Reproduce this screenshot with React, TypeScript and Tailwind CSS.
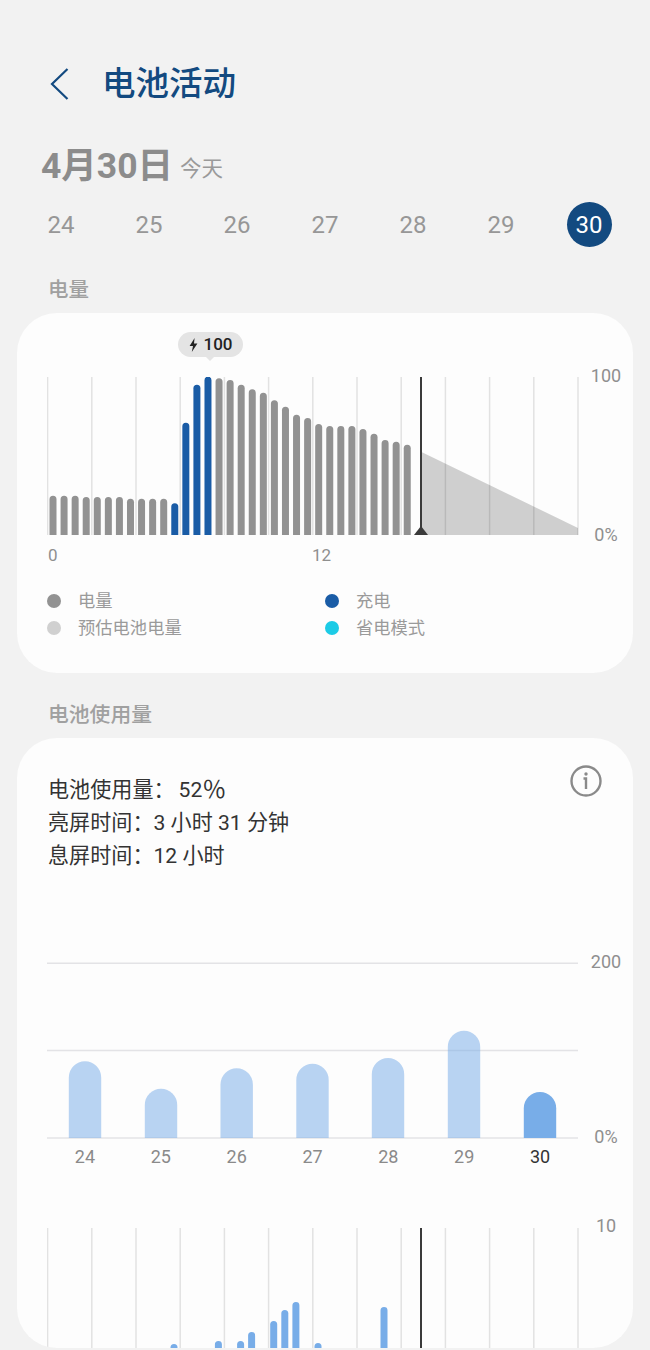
const days = ["24", "25", "26", "27", "28", "29", "30"]

// top of each bar in the level chart, in page pixels
const levelTops = [
  495.7, 495.7, 495.7, 497, 497, 497, 497, 498.7, 498.7, 498.7, 498.7, 503.3, 422.7, 384.7, 376.7, 378.3, 380,
  384.7, 389.3, 392.7, 400.3, 406.7, 414.7, 418, 424, 426, 426, 426, 429, 433.7, 440, 441.7, 444.7,
]
const chargingBars = [11, 12, 13, 14]

const usageBars = [
  { x: 85, top: 1061.3 },
  { x: 161, top: 1088.7 },
  { x: 236.7, top: 1068.3 },
  { x: 312.5, top: 1063.7 },
  { x: 388, top: 1058 },
  { x: 464, top: 1030.7 },
  { x: 540, top: 1092, today: true },
]

const hourlyBars = [
  { x: 174, top: 1344 },
  { x: 218.4, top: 1341 },
  { x: 240.6, top: 1341 },
  { x: 251.6, top: 1332 },
  { x: 273.7, top: 1321 },
  { x: 284.8, top: 1310 },
  { x: 295.9, top: 1302 },
  { x: 318, top: 1343 },
  { x: 329, top: 1349 },
  { x: 384, top: 1307 },
]

const gridX = Array.from({ length: 13 }, (_, i) => 47.6 + 44.2 * i)

function barPath(x: number, top: number, bottom: number, w: number) {
  const r = w / 2
  return `M${x - r} ${bottom}V${top + r}A${r} ${r} 0 0 1 ${x + r} ${top + r}V${bottom}Z`
}

function GridLines({ y1, y2 }: { y1: number; y2: number }) {
  return (
    <>
      {gridX.map((x) => (
        <line key={x} x1={x} x2={x} y1={y1} y2={y2} stroke="#e2e2e2" strokeWidth="1.5" />
      ))}
    </>
  )
}

function LevelChart() {
  return (
    <svg viewBox="47 377 532 159" className="block h-[159px] w-[532px] shrink-0">
      <GridLines y1={377} y2={535} />
      {levelTops.map((top, i) => (
        <path
          key={i}
          d={barPath(53 + 11.07 * i, top, 535, 7)}
          fill={chargingBars.includes(i) ? "#1a5ca6" : "#929292"}
        />
      ))}
      <polygon points="421,451.7 578,528 578,535 421,535" fill="#000000" fillOpacity="0.18" />
      <line x1="421" x2="421" y1="377" y2="535" stroke="#3a3a3a" strokeWidth="2" />
      <polygon points="421,526 428,535 414,535" fill="#3a3a3a" />
    </svg>
  )
}

function UsageChart() {
  return (
    <svg viewBox="47 962 532 177" className="block h-[177px] w-[532px] shrink-0">
      {[963.3, 1050.5, 1138].map((y) => (
        <line key={y} x1="47" x2="578" y1={y} y2={y} stroke="#e3e3e6" strokeWidth="1.5" />
      ))}
      {usageBars.map((bar) => (
        <path
          key={bar.x}
          d={barPath(bar.x, bar.top, 1138, 32.4)}
          fill="#78ade8"
          fillOpacity={bar.today ? 1 : 0.52}
        />
      ))}
    </svg>
  )
}

function HourlyChart() {
  return (
    <svg viewBox="47 1228 532 122" className="block h-[122px] w-[532px] shrink-0">
      <GridLines y1={1228} y2={1350} />
      {hourlyBars.map((bar) => (
        <path key={bar.x} d={barPath(bar.x, bar.top, 1352, 7)} fill="#78ade8" />
      ))}
      <line x1="421" x2="421" y1="1228" y2="1350" stroke="#3a3a3a" strokeWidth="2" />
    </svg>
  )
}

function LegendItem({ color, label }: { color: string; label: string }) {
  return (
    <div className="flex h-[27px] items-center gap-[17px]">
      <span className={`h-[14px] w-[14px] rounded-full ${color}`} />
      <span className="pt-[2px] text-[17.3px] text-[#9a9a9a]">{label}</span>
    </div>
  )
}

export default function App() {
  return (
    <div className="h-[1350px] w-[650px] overflow-hidden bg-[#f2f2f2] [font-family:Roboto,'Noto_Sans_CJK_SC',sans-serif]">
      {/* Header */}
      <div className="mt-[60px] flex h-[48px] items-center pl-[50px]">
        <svg width="20" height="32" viewBox="0 0 20 32" fill="none" className="shrink-0">
          <path d="M17.5 1L2 16L17.5 31" stroke="#134a80" strokeWidth="2.2" />
        </svg>
        <h1 className="ml-[32px] text-[33.5px] font-medium text-[#134a80]">电池活动</h1>
      </div>

      {/* Date */}
      <div className="mt-[37px] flex h-[40px] items-baseline pl-[41px] text-[#8c8c8c]">
        <span className="pt-[1px] text-[35.5px] leading-[40px] font-bold">4月30日</span>
        <span className="ml-[7px] -translate-y-[2px] text-[21.5px] text-[#9a9a9a]">今天</span>
      </div>

      {/* Day picker */}
      <div className="mx-[17px] mt-[17px] grid h-[45px] grid-cols-7">
        {days.map((day) => (
          <div key={day} className="flex items-center justify-center">
            {day === "30" ? (
              <span className="flex h-[45px] w-[45px] items-center justify-center rounded-full bg-[#134a80] text-[24px] text-white">
                {day}
              </span>
            ) : (
              <span className="text-[24px] text-[#979797]">{day}</span>
            )}
          </div>
        ))}
      </div>

      <div className="mt-[31px] h-[24px] pl-[48px] text-[20.5px] leading-[25px] font-medium text-[#a0a0a0]">电量</div>

      {/* Battery level card */}
      <div className="relative mx-[17px] mt-[11px] h-[360px] overflow-hidden rounded-[40px] bg-[#fdfdfd] pt-[64px] pl-[30px]">
        <div className="absolute top-[19px] left-[161px] flex h-[25px] w-[65px] items-center justify-center gap-[6px] rounded-full bg-[#e4e4e4]">
          <svg width="9" height="14" viewBox="0 0 9 14" className="shrink-0">
            <path d="M5.6 0L0.6 8H4L2.8 14L8.4 5.4H5L5.6 0Z" fill="#222222" />
          </svg>
          <span className="text-[17px] font-medium text-[#222222]">100</span>
          <span className="absolute -bottom-[4px] left-[28px] h-0 w-0 border-x-[4px] border-t-[4px] border-x-transparent border-t-[#e4e4e4]" />
        </div>
        <div className="flex">
          <LevelChart />
          <div className="-mt-[12px] -mb-[22px] ml-[5px] flex h-[181px] w-[44px] flex-col items-center justify-between text-[18px] leading-[22px] text-[#8f8f8f]">
            <span>100</span>
            <span>0%</span>
          </div>
        </div>
        <div className="mt-[8px] grid w-[530px] grid-cols-2 text-[17px] leading-[22px] text-[#8f8f8f]">
          <span className="pl-[1px]">0</span>
          <span>12</span>
        </div>
        <div className="mt-[21px] grid grid-cols-[278px_278px]">
          <LegendItem color="bg-[#929292]" label="电量" />
          <LegendItem color="bg-[#1a5ca6]" label="充电" />
          <LegendItem color="bg-[#d0d0d0]" label="预估电池电量" />
          <LegendItem color="bg-[#1ccbe6]" label="省电模式" />
        </div>
      </div>

      <div className="mt-[29px] h-[25px] pl-[48px] text-[20.8px] leading-[26px] font-medium text-[#a0a0a0]">电池使用量</div>

      {/* Battery usage card */}
      <div className="mx-[17px] mt-[11px] h-[610px] overflow-hidden rounded-[40px] bg-[#fdfdfd] pl-[30px]">
        <div className="flex items-start justify-between pt-[35px] pr-[31px] pl-[1px]">
          <div className="text-[21.1px] leading-[33px] text-[#333333]">
            <div className="flex items-center">
              电池使用量：
              <span className="ml-[4px]">52</span>
              <span className="text-[24px] leading-none">％</span>
            </div>
            <div>亮屏时间：3 小时 31 分钟</div>
            <div>息屏时间：12 小时</div>
          </div>
          <svg width="32" height="32" viewBox="0 0 32 32" fill="none" className="-mt-[8px] shrink-0">
            <circle cx="16" cy="16" r="14.5" stroke="#8a8a8a" strokeWidth="2.4" />
            <circle cx="16" cy="9" r="1.7" fill="#8a8a8a" />
            <path d="M13.5 13.5H16V24" stroke="#8a8a8a" strokeWidth="2.4" />
          </svg>
        </div>

        <div className="mt-[90px] flex">
          <UsageChart />
          <div className="-mt-[11px] -mb-[22px] ml-[5px] flex h-[197px] w-[44px] flex-col items-center justify-between text-[18px] leading-[22px] text-[#8f8f8f]">
            <span>200</span>
            <span>0%</span>
          </div>
        </div>
        <div className="mt-[7px] grid h-[22px] w-[531px] grid-cols-7 text-center text-[18px] leading-[22px] text-[#8a8a8a]">
          {days.map((day) => (
            <span key={day} className={day === "30" ? "text-[#333333]" : ""}>
              {day}
            </span>
          ))}
        </div>

        <div className="mt-[60px] flex">
          <HourlyChart />
          <div className="-mt-[13px] ml-[5px] w-[44px] text-center text-[18px] leading-[22px] text-[#8f8f8f]">10</div>
        </div>
      </div>
    </div>
  )
}
